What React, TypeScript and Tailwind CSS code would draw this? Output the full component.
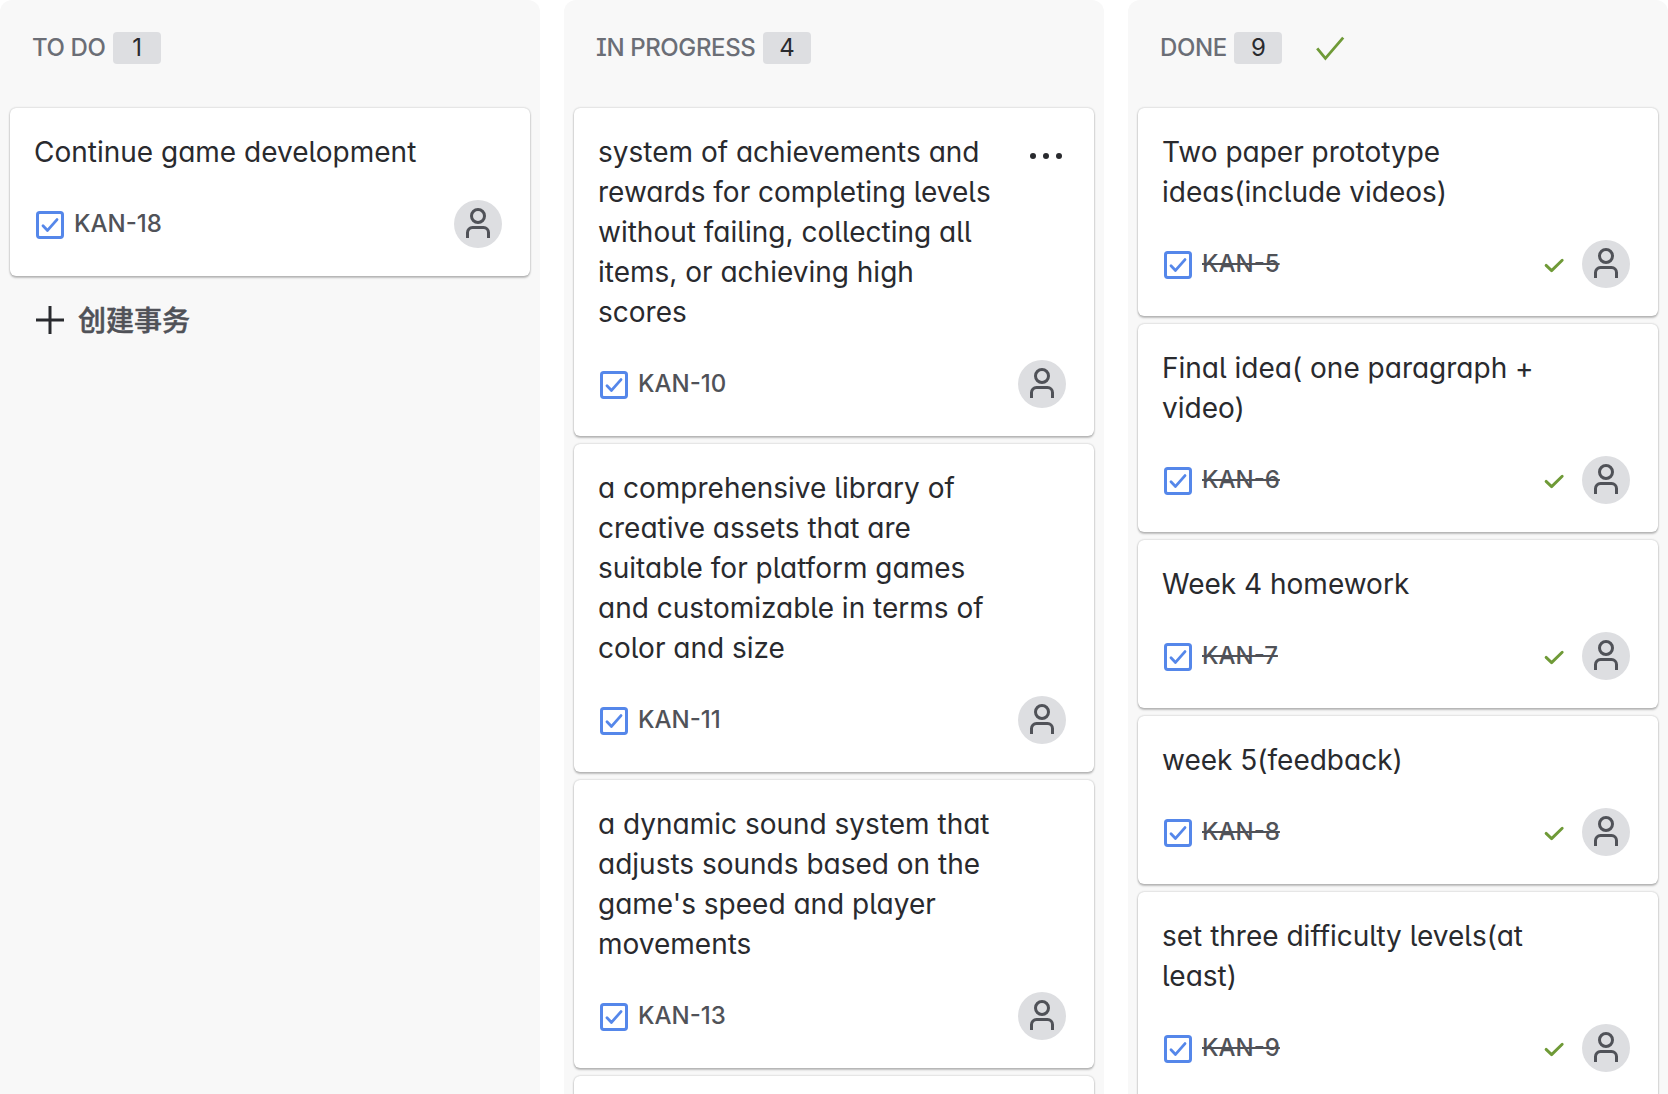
type Issue = { title: string; id: string; done?: boolean; menu?: boolean };

const todo: Issue[] = [{ title: "Continue game development", id: "KAN-18" }];

const inProgress: Issue[] = [
  {
    title:
      "system of achievements and rewards for completing levels without failing, collecting all items, or achieving high scores",
    id: "KAN-10",
    menu: true,
  },
  {
    title:
      "a comprehensive library of creative assets that are suitable for platform games and customizable in terms of color and size",
    id: "KAN-11",
  },
  {
    title: "a dynamic sound system that adjusts sounds based on the game's speed and player movements",
    id: "KAN-13",
  },
];

const done: Issue[] = [
  { title: "Two paper prototype ideas(include videos)", id: "KAN-5", done: true },
  { title: "Final idea( one paragraph + video)", id: "KAN-6", done: true },
  { title: "Week 4 homework", id: "KAN-7", done: true },
  { title: "week 5(feedback)", id: "KAN-8", done: true },
  { title: "set three difficulty levels(at least)", id: "KAN-9", done: true },
];

function TaskIcon() {
  return (
    <svg className="mt-0.5 size-7 shrink-0" viewBox="0 0 28 28" fill="none" stroke="#5587ea">
      <rect x="1.5" y="1.5" width="25" height="25" rx="2.2" strokeWidth="3" />
      <path d="M7 14.8l4.5 4.6L21 8.6" strokeWidth="2.8" strokeLinecap="round" strokeLinejoin="round" />
    </svg>
  );
}

function Avatar() {
  return (
    <span className="size-12 shrink-0 rounded-full bg-[#dddee1]">
      <svg className="size-12" viewBox="0 0 48 48" fill="none" stroke="#505258" strokeWidth="3">
        <circle cx="24" cy="16" r="6.5" />
        <path d="M13.5 38v-5.5a5 5 0 0 1 5-5h11a5 5 0 0 1 5 5V38" />
      </svg>
    </span>
  );
}

function DoneCheck() {
  return (
    <svg className="mt-0.5 mr-4 h-8 w-6 shrink-0" viewBox="0 0 24 32" fill="none" stroke="#6f9a37">
      <path d="M4.1 16.4l5.5 5.2L20.2 11.3" strokeWidth="2.9" strokeLinecap="round" strokeLinejoin="round" />
    </svg>
  );
}

const cardBox = "rounded-[6px] bg-white shadow-[0_2px_2px_#1e1f2140,0_0_2px_#1e1f214f]";

function Card({ issue }: { issue: Issue }) {
  return (
    <article className={`${cardBox} px-6 pt-6 pb-7`}>
      <div className="flex items-start justify-between">
        <h3 className="w-[400px] text-[28px] leading-10">{issue.title}</h3>
        {issue.menu && (
          <button className="mr-2 flex h-12 w-8 items-center justify-center gap-[7px]" aria-label="More actions">
            <span className="size-1.5 rounded-full bg-[#292a2e]" />
            <span className="size-1.5 rounded-full bg-[#292a2e]" />
            <span className="size-1.5 rounded-full bg-[#292a2e]" />
          </button>
        )}
      </div>
      <footer className="mt-7 flex h-12 items-center pr-1 pl-0.5">
        <TaskIcon />
        <span
          className={`ml-2.5 text-2xl font-medium text-[#505258] ${issue.done ? "line-through decoration-2" : ""}`}
        >
          {issue.id}
        </span>
        <span className="flex-1" />
        {issue.done && <DoneCheck />}
        <Avatar />
      </footer>
    </article>
  );
}

function Column({
  name,
  count,
  issues,
  complete,
  children,
}: {
  name: string;
  count: number;
  issues: Issue[];
  complete?: boolean;
  children?: React.ReactNode;
}) {
  return (
    <section className="w-[540px] shrink-0 rounded-t-[12px] bg-[#f8f8f8] px-2.5">
      <header className="flex h-[108px] items-start pt-8 pl-[22px]">
        <h2 className="text-2xl leading-[31px] font-medium tracking-[-0.4px] text-[#6b6e76]">{name}</h2>
        <span className="ml-[7.6px] h-8 w-12 rounded-[4px] bg-[#dddee1] text-center text-2xl leading-[31px]">
          {count}
        </span>
        {complete && (
          <svg className="ml-[31.5px] h-8 w-8" viewBox="0 0 32 32" fill="none" stroke="#6f9a37">
            <path d="M3.2 16.4l8.2 10L29.2 5.6" strokeWidth="2.8" />
          </svg>
        )}
      </header>
      <div className="flex flex-col gap-2">
        {issues.map((issue) => (
          <Card key={issue.id} issue={issue} />
        ))}
        {children}
      </div>
    </section>
  );
}

export default function App() {
  return (
    <main className="flex h-screen gap-6 overflow-hidden bg-white font-[Inter,'Noto_Sans_CJK_SC',sans-serif] text-[#292a2e] [font-feature-settings:'cv11','cv05','cv08']">
      <Column name="TO DO" count={1} issues={todo}>
        <button className="mt-4 flex h-10 items-center gap-3.5 pl-[26px] text-[28px] leading-10 text-[#505258]">
          <svg className="size-7" viewBox="0 0 28 28" stroke="#292a2e" strokeWidth="3">
            <path d="M14 0v28M0 14h28" />
          </svg>
          <span className="pt-px font-medium [-webkit-text-stroke:0.5px_#505258]">创建事务</span>
        </button>
      </Column>
      <Column name="IN PROGRESS" count={4} issues={inProgress}>
        <div className={`${cardBox} h-42`} />
      </Column>
      <Column name="DONE" count={9} issues={done} complete />
    </main>
  );
}
